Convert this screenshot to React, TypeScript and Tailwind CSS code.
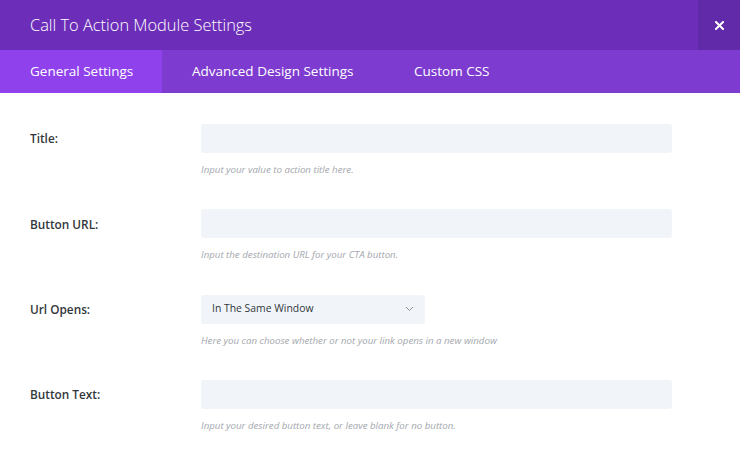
import React from "react";

const fields = [
  { label: "Title:", help: "Input your value to action title here.", type: "text" },
  { label: "Button URL:", help: "Input the destination URL for your CTA button.", type: "text" },
  { label: "Url Opens:", help: "Here you can choose whether or not your link opens in a new window", type: "select" },
  { label: "Button Text:", help: "Input your desired button text, or leave blank for no button.", type: "text" },
];

export default function App() {
  return (
    <div className="w-[740px] h-[456px] bg-white overflow-hidden" style={{ fontFamily: '"Open Sans", "Noto Sans", sans-serif' }}>
      {/* Header */}
      <div className="flex h-[50px] bg-[#6c2eb9]">
        <div className="flex-1 flex items-center pl-[30px] text-[16.4px] text-white font-light">
          Call To Action Module Settings
        </div>
        <div className="w-[42px] flex items-center justify-center bg-[#612aa8]">
          <svg width="9" height="9" viewBox="0 0 9 9">
            <path d="M1 1 L8 8 M8 1 L1 8" stroke="white" strokeWidth="2" strokeLinecap="square" />
          </svg>
        </div>
      </div>

      {/* Tabs */}
      <div className="flex h-[43px] bg-[#7e3bd0] text-[13.5px] text-white">
        <div className="w-[162px] flex items-center pl-[30px] bg-[#8f42ec]">General Settings</div>
        <div className="flex items-center pl-[30px] w-[222px]">Advanced Design Settings</div>
        <div className="flex items-center pl-[30px]">Custom CSS</div>
      </div>

      {/* Fields */}
      <div className="pt-[31px]">
        {fields.map((f) => (
          <div key={f.label} className="flex h-[85.4px]">
            <div className="w-[201px] pl-[30px] h-[30px] flex items-center text-[11.8px] font-semibold text-[#32373c]">
              {f.label}
            </div>
            <div className="flex flex-col">
              {f.type === "select" ? (
                <div className="w-[224px] h-[29px] rounded-[3px] bg-[#f1f5f9] flex items-center justify-between pl-[11px] pr-[11px] text-[10.4px] text-[#32373c]">
                  <span>In The Same Window</span>
                  <svg width="9" height="6" viewBox="0 0 9 6">
                    <path d="M1 1 L4.5 4.5 L8 1" stroke="#8a96a3" strokeWidth="1" fill="none" />
                  </svg>
                </div>
              ) : (
                <div className="w-[471px] h-[29px] rounded-[3px] bg-[#f1f5f9]" />
              )}
              <div className="mt-[10px] text-[9.7px] italic text-[#a3a7ad] leading-[13px]">{f.help}</div>
            </div>
          </div>
        ))}
      </div>
    </div>
  );
}
